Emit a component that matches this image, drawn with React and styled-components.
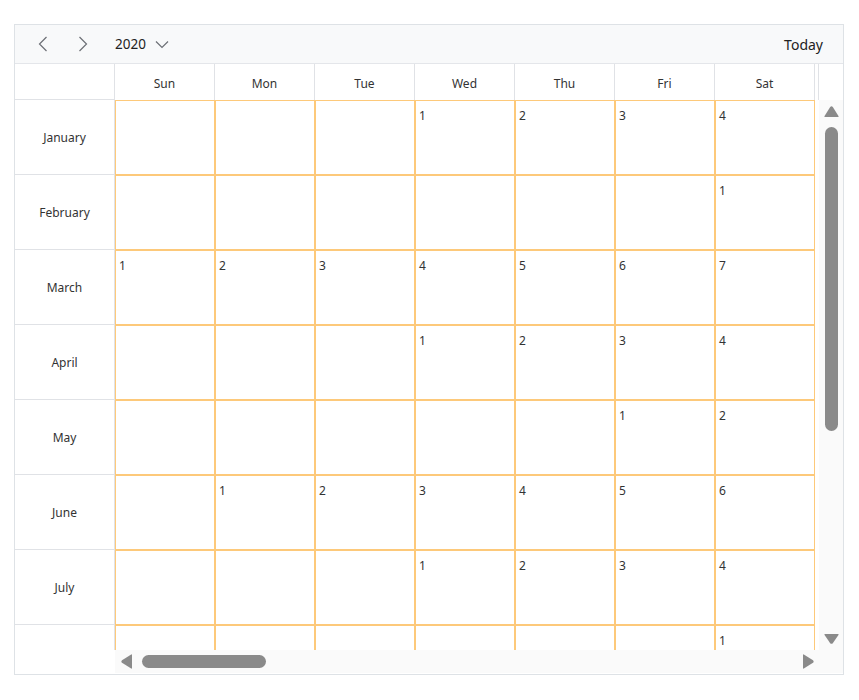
import React from 'react';
import styled, { createGlobalStyle } from 'styled-components';

const GlobalStyle = createGlobalStyle`
    body {
        margin: 0;
        background: #ffffff;
        font-family: "Noto Sans", "Open Sans", sans-serif;
        color: #333333;
    }
`;

const Page = styled.div`
    padding: 24px 0 0 14px;
`;

const Scheduler = styled.div`
    width: 830px;
    height: 651px;
    box-sizing: border-box;
    border: 1px solid #dee2e6;
    display: flex;
    flex-direction: column;
    overflow: hidden;
`;

const Toolbar = styled.div`
    height: 39px;
    box-sizing: border-box;
    border-bottom: 1px solid #e4e6ea;
    background: #f8f9fa;
    display: flex;
    align-items: center;
    padding: 0 20px 0 15px;
    flex-shrink: 0;
`;

const NavButton = styled.button`
    border: none;
    background: transparent;
    width: 26px;
    height: 30px;
    padding: 0;
    margin-right: ${(p) => p.$gap || 0}px;
    display: flex;
    align-items: center;
    justify-content: center;
    cursor: pointer;
`;

const YearPicker = styled.div`
    display: flex;
    align-items: center;
    gap: 9px;
    font-size: 13.5px;
    color: #222;
    margin-left: 19px;
`;

const Spacer = styled.div`
    flex: 1;
`;

const TodayButton = styled.div`
    font-size: 14px;
    color: #222;
`;

const HeaderRow = styled.div`
    display: flex;
    height: 36px;
    flex-shrink: 0;
`;

const Corner = styled.div`
    width: 100px;
    box-sizing: border-box;
    border-right: 1px solid #e0e2e6;
    border-bottom: 1px solid #e0e2e6;
`;

const DayHead = styled.div`
    width: ${(p) => p.$w || 100}px;
    box-sizing: border-box;
    border-right: 1px solid #e0e2e6;
    display: flex;
    align-items: center;
    justify-content: center;
    padding-top: 2px;
    font-size: 12px;
    color: #333;
`;

const Body = styled.div`
    flex: 1;
    display: flex;
    min-height: 0;
`;

const MonthColumn = styled.div`
    width: 100px;
    height: 550px;
    box-sizing: border-box;
    border-right: 1px solid #e0e2e6;
    overflow: hidden;
    flex-shrink: 0;
`;

const MonthCell = styled.div`
    height: 75px;
    box-sizing: border-box;
    border-bottom: 1px solid #e0e2e6;
    display: flex;
    align-items: center;
    justify-content: center;
    font-size: 12px;
    color: #333;
`;

const RightPane = styled.div`
    width: 728px;
    display: flex;
    flex-direction: column;
`;

const ViewRow = styled.div`
    display: flex;
    height: 550px;
`;

const GridViewport = styled.div`
    width: 704px;
    overflow: hidden;
`;

const WeekRow = styled.div`
    display: flex;
`;

const DayCell = styled.div`
    width: 100px;
    height: 75px;
    box-sizing: border-box;
    border: 1px solid #fdc97a;
    padding: 7px 3px;
    font-size: 12px;
    line-height: 16px;
    color: #333;
`;

const VScroll = styled.div`
    width: 24px;
    background: #fafafa;
    display: flex;
    flex-direction: column;
    align-items: center;
    padding: 6px 0 6px;
    box-sizing: border-box;
`;

const ScrollFooter = styled.div`
    display: flex;
    height: 23px;
    background: #fafafa;
`;

const HScroll = styled.div`
    width: 704px;
    display: flex;
    align-items: center;
    padding: 0 5px 0 6px;
    box-sizing: border-box;
`;

const VThumb = styled.div`
    width: 13px;
    height: 304px;
    border-radius: 7px;
    background: #8a8a8a;
    margin-top: 10px;
`;

const HThumb = styled.div`
    width: 124px;
    height: 13px;
    border-radius: 7px;
    background: #8a8a8a;
    margin-left: 10px;
`;

const Arrow = styled.svg`
    display: block;
    flex-shrink: 0;
`;

const Chevron = ({ dir }) => (
    <svg width="12" height="18" viewBox="0 0 12 18">
        <polyline
            points={dir === 'left' ? '9.5,2 2.5,9 9.5,16' : '2.5,2 9.5,9 2.5,16'}
            fill="none"
            stroke="#6c6f75"
            strokeWidth="1.2"
        />
    </svg>
);

const DropChevron = () => (
    <svg width="14" height="9" viewBox="0 0 14 9">
        <polyline points="1,1.5 7,7.5 13,1.5" fill="none" stroke="#6c6f75" strokeWidth="1.2" />
    </svg>
);

const days = ['Sun', 'Mon', 'Tue', 'Wed', 'Thu', 'Fri', 'Sat'];
// the eighth row (August) is scrolled below the fold, its label is out of view
const months = ['January', 'February', 'March', 'April', 'May', 'June', 'July', ''];

// first week of every month in 2020
const firstWeek = (m) => {
    const start = new Date(2020, m, 1).getDay();
    return days.map((_, i) => (i >= start ? i - start + 1 : ''));
};

const App = () => {
    return (
        <>
            <GlobalStyle />
            <Page>
                <Scheduler>
                    <Toolbar>
                        <NavButton $gap={14}><Chevron dir="left" /></NavButton>
                        <NavButton><Chevron dir="right" /></NavButton>
                        <YearPicker>
                            2020
                            <DropChevron />
                        </YearPicker>
                        <Spacer />
                        <TodayButton>Today</TodayButton>
                    </Toolbar>
                    <HeaderRow>
                        <Corner />
                        {days.map((d) => (
                            <DayHead key={d}>{d}</DayHead>
                        ))}
                        <DayHead $w={4} />
                    </HeaderRow>
                    <Body>
                        <MonthColumn>
                            {months.map((m, mi) => (
                                <MonthCell key={mi}>{m}</MonthCell>
                            ))}
                        </MonthColumn>
                        <RightPane>
                            <ViewRow>
                                <GridViewport>
                                    {months.map((m, mi) => (
                                        <WeekRow key={mi}>
                                            {firstWeek(mi).map((n, i) => (
                                                <DayCell key={i}>{n}</DayCell>
                                            ))}
                                        </WeekRow>
                                    ))}
                                </GridViewport>
                                <VScroll>
                                    <Arrow width="15" height="11" viewBox="0 0 15 11">
                                        <path d="M6.2 1 Q7.5 -0.3 8.8 1 L14.6 10.2 Q15 11 14 11 L1 11 Q0 11 0.4 10.2 Z" fill="#8a8a8a" />
                                    </Arrow>
                                    <VThumb />
                                    <Spacer />
                                    <Arrow width="15" height="10" viewBox="0 0 15 10">
                                        <path d="M6.2 9.2 Q7.5 10.4 8.8 9.2 L14.6 0.8 Q15 0 14 0 L1 0 Q0 0 0.4 0.8 Z" fill="#8a8a8a" />
                                    </Arrow>
                                </VScroll>
                            </ViewRow>
                            <ScrollFooter>
                                <HScroll>
                                    <Arrow width="11" height="15" viewBox="0 0 11 15">
                                        <path d="M1 6.2 Q-0.3 7.5 1 8.8 L10.2 14.6 Q11 15 11 14 L11 1 Q11 0 10.2 0.4 Z" fill="#8a8a8a" />
                                    </Arrow>
                                    <HThumb />
                                    <Spacer />
                                    <Arrow width="11" height="15" viewBox="0 0 11 15">
                                        <path d="M10 6.2 Q11.3 7.5 10 8.8 L0.8 14.6 Q0 15 0 14 L0 1 Q0 0 0.8 0.4 Z" fill="#8a8a8a" />
                                    </Arrow>
                                </HScroll>
                            </ScrollFooter>
                        </RightPane>
                    </Body>
                </Scheduler>
            </Page>
        </>
    );
};

export default App;
